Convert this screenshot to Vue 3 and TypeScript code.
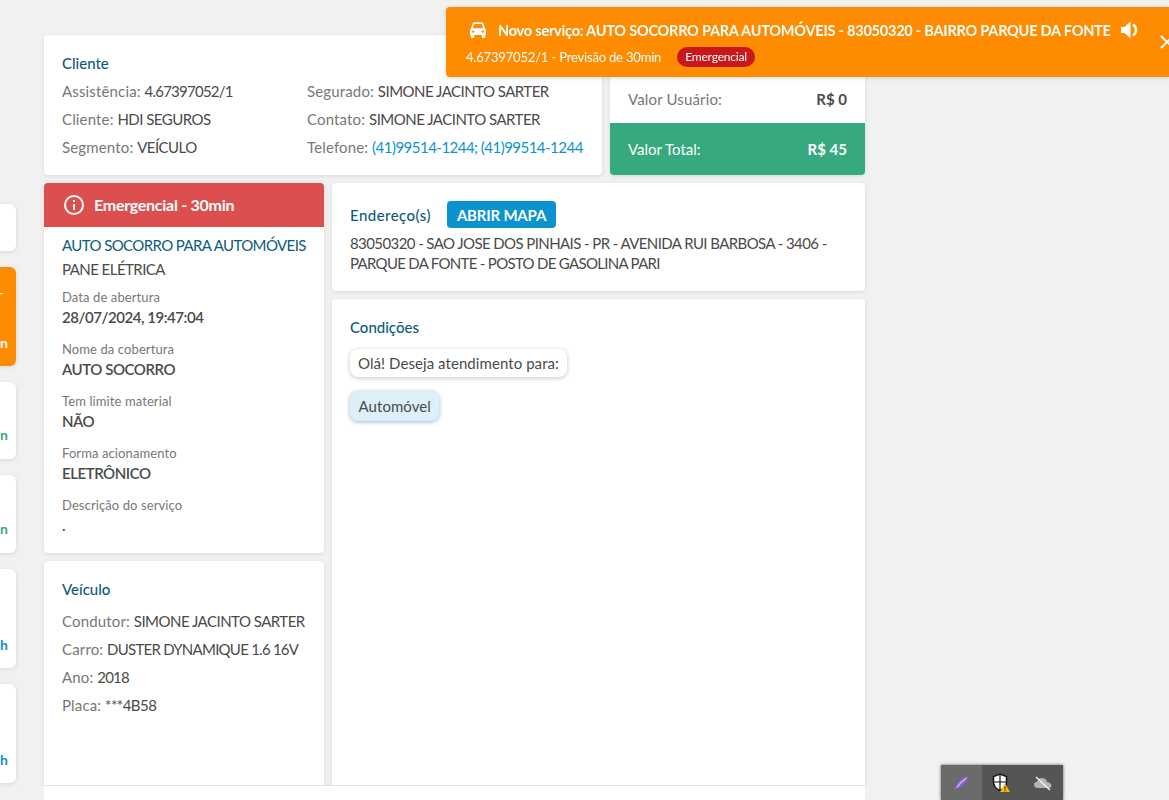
<script setup lang="ts">
interface Side { h: number; text: string; tone: string }
const sideItems: Side[] = [
  { h: 47, text: '', tone: '' },
  { h: 99, text: 'n', tone: 'orange' },
  { h: 77, text: 'n', tone: 'green' },
  { h: 78, text: 'n', tone: 'green' },
  { h: 99, text: 'h', tone: 'blue' },
  { h: 99, text: 'h', tone: 'blue' },
]
const details = [
  { label: 'Data de abertura', value: '28/07/2024, 19:47:04' },
  { label: 'Nome da cobertura', value: 'AUTO SOCORRO' },
  { label: 'Tem limite material', value: 'NÃO' },
  { label: 'Forma acionamento', value: 'ELETRÔNICO' },
  { label: 'Descrição do serviço', value: '.' },
]
const vehicle = [
  { k: 'Condutor', v: 'SIMONE JACINTO SARTER', tight: false },
  { k: 'Carro', v: 'DUSTER DYNAMIQUE 1.6 16V', tight: true },
  { k: 'Ano', v: '2018', tight: true },
  { k: 'Placa', v: '***4B58', tight: false },
]
</script>

<template>
  <div class="page">
    <aside class="side">
      <div v-for="(s, i) in sideItems" :key="i" class="side-card" :class="s.tone" :style="{ height: s.h + 'px' }">
        <span v-if="s.tone === 'orange'" class="dash">-</span>
        <span v-if="s.text" class="side-text">{{ s.text }}</span>
      </div>
    </aside>

    <main class="main">
      <div class="row-top">
        <section class="card client">
          <h3 class="title">Cliente</h3>
          <div class="client-grid">
            <div class="col-a">
              <p><span class="k">Assistência:</span> <span class="v num">4.67397052/1</span></p>
              <p><span class="k">Cliente:</span> <span class="v">HDI SEGUROS</span></p>
              <p><span class="k">Segmento:</span> <span class="v">VEÍCULO</span></p>
            </div>
            <div class="col-b">
              <p><span class="k">Segurado:</span> <span class="v">SIMONE JACINTO SARTER</span></p>
              <p><span class="k">Contato:</span> <span class="v">SIMONE JACINTO SARTER</span></p>
              <p><span class="k">Telefone:</span> <span class="link v">(41)99514-1244; (41)99514-1244</span></p>
            </div>
          </div>
        </section>
        <section class="card values">
          <div class="val-row"><span class="k">Valor Usuário:</span><b>R$ 0</b></div>
          <div class="val-total"><span>Valor Total:</span><b>R$ 45</b></div>
        </section>
      </div>

      <div class="row-body">
        <div class="left-col">
          <section class="card service">
            <div class="alert">
              <svg width="22" height="22" viewBox="0 0 22 22" fill="none" stroke="#fff" stroke-width="2">
                <circle cx="11" cy="11" r="9" />
                <path d="M11 10v6M11 6v2" />
              </svg>
              <span class="alert-text">Emergencial - 30min</span>
            </div>
            <div class="service-body">
              <div class="svc-title">AUTO SOCORRO PARA AUTOMÓVEIS</div>
              <div class="svc-sub">PANE ELÉTRICA</div>
              <div v-for="d in details" :key="d.label" class="detail">
                <div class="d-label">{{ d.label }}</div>
                <div class="d-value">{{ d.value }}</div>
              </div>
            </div>
          </section>
          <section class="card vehicle">
            <h3 class="title">Veículo</h3>
            <p v-for="r in vehicle" :key="r.k"><span class="k">{{ r.k }}:</span> <span class="v" :class="{ num: r.tight }">{{ r.v }}</span></p>
          </section>
        </div>
        <div class="right-col">
          <section class="card address">
            <div class="addr-head">
              <h3 class="title wide">Endereço(s)</h3>
              <button class="map-btn">ABRIR MAPA</button>
            </div>
            <p class="addr-text">
              <span class="addr-a">83050320 - SAO JOSE DOS PINHAIS - PR - AVENIDA RUI BARBOSA - 3406 -</span>
              <span class="addr-b">PARQUE DA FONTE - POSTO DE GASOLINA PARI</span>
            </p>
          </section>
          <section class="card conditions">
            <h3 class="title">Condições</h3>
            <div class="bubble">Olá! Deseja atendimento para:</div>
            <div class="bubble answer">Automóvel</div>
          </section>
        </div>
      </div>
      <div class="footer"></div>
    </main>

    <div class="toast">
      <div class="toast-line1">
        <svg class="car" width="18" height="16" viewBox="0 0 18 16" fill="none">
          <path d="M2.800 7 4 2.600C4.200 1.800 4.800 1.200 5.600 1.200h6.800c.8 0 1.400.6 1.600 1.400L15.200 7" stroke="#fff" stroke-width="1.700" />
          <path d="M1 8.200C1 7 1.800 6.300 3 6.300h12c1.200 0 2 .7 2 1.900V13H1z" fill="#fff" />
          <path d="M1.800 13h3.400v2.200a.8.8 0 0 1-.8.8H2.600a.8.8 0 0 1-.8-.8zM12.800 13h3.400v2.200a.8.8 0 0 1-.8.8h-1.800a.8.8 0 0 1-.8-.8z" fill="#fff" />
          <circle cx="4.200" cy="9.600" r="1.200" fill="#ff8c00" />
          <circle cx="13.800" cy="9.600" r="1.200" fill="#ff8c00" />
        </svg>
        <b>Novo serviço: AUTO SOCORRO PARA AUTOMÓVEIS - 83050320 - BAIRRO PARQUE DA FONTE</b>
        <svg class="sound" width="18" height="18" viewBox="0 0 18 18" fill="none">
          <path d="M0 6h3.500L9.500 .5v17L3.500 12H0z" fill="#fff" />
          <path d="M12 3.500a6.500 6.500 0 0 1 0 11" stroke="#fff" stroke-width="2.400" />
        </svg>
      </div>
      <div class="toast-line2">
        <span>4.67397052/1 - Previsão de 30min</span>
        <span class="pill">Emergencial</span>
      </div>
      <svg class="close" width="14" height="14" viewBox="0 0 14 14" stroke="#fff" stroke-width="1.800"><path d="M1 1l12 12M13 1 1 13" /></svg>
    </div>

    <div class="tray">
      <div class="tile on">
        <svg width="16" height="16" viewBox="0 0 16 16">
          <path d="M1 15C2.500 9 8 3 15 1c-.5 5.500-4.500 10.500-11 12z" fill="#9060d0" />
          <path d="M4 12.500C6.500 8.500 9.500 5.500 13.500 3" stroke="#d6bdf5" stroke-width="1.300" fill="none" />
        </svg>
      </div>
      <div class="tile">
        <svg width="20" height="20" viewBox="0 0 20 20">
          <path d="M8 1.200 14.500 3.500V9c0 4-3 7-6.500 8.500C4.500 16 1.500 13 1.500 9V3.500z" fill="#fff" stroke="#111" stroke-width="1.400" />
          <path d="M8 2v15M2 9h12" stroke="#111" stroke-width="1.200" />
          <path d="M13 10.500 18 19H8z" fill="#f5b800" />
          <path d="M13 13.500v3M13 17.200v1" stroke="#222" stroke-width="1" />
        </svg>
      </div>
      <div class="tile">
        <svg width="20" height="16" viewBox="0 0 20 16">
          <path d="M4.500 13C2.500 13 1 11.600 1 9.800 1 8 2.400 6.800 4 6.700 4.700 4.500 6.700 3 9 3c2.700 0 4.900 1.900 5.300 4.300C16.800 7.400 18.500 9 18.500 10.500c0 1.700-1.200 2.500-2.500 2.500z" fill="#b4b4b4" />
          <path d="M3 2l14 13" stroke="#f2f2f2" stroke-width="1.500" />
        </svg>
      </div>
    </div>
  </div>
</template>

<style>
html, body { margin: 0; background: #f1f1f1; overflow: hidden; }
</style>

<style scoped>
.page {
  display: flex;
  height: 800px;
  overflow: hidden;
  background: #f1f1f1;
  font-family: Lato, "Noto Sans", sans-serif;
  font-size: 15px;
  color: #4a4a4a;
}
p { margin: 0; }
.side {
  width: 16px;
  flex: none;
  padding-top: 204px;
  display: flex;
  flex-direction: column;
  gap: 16px;
}
.side-card {
  flex: none;
  background: #fff;
  border-radius: 0 6px 6px 0;
  box-shadow: 0 1px 4px rgba(0, 0, 0, .12);
  position: relative;
  overflow: hidden;
}
.side-text {
  position: absolute;
  right: 8px;
  bottom: 15px;
  font-size: 14px;
  font-weight: 700;
}
.side-card.orange { background: #ff8c00; color: #fff; }
.dash { position: absolute; right: 12px; top: 17px; font-size: 14px; color: #fff; }
.side-card.green .side-text { color: #36a97f; bottom: 16px; }
.side-card.blue .side-text { color: #0a93cf; }
.main {
  width: 821px;
  margin-left: 28px;
  padding-top: 35px;
  flex: none;
  display: flex;
  flex-direction: column;
}
.card {
  background: #fff;
  border-radius: 4px;
  box-shadow: 0 1px 4px rgba(0, 0, 0, .1);
}
.title {
  margin: 0;
  font-size: 15px;
  font-weight: 500;
  color: #0d5b7e;
  line-height: 20px;
}
.title.wide { letter-spacing: .45px; }
.k { color: #777; letter-spacing: .15px; }
.v { letter-spacing: -.52px; }
.v.num { letter-spacing: -.75px; }
.row-top { display: flex; gap: 8px; height: 140px; }
.client { width: 558px; padding: 18px 18px 0; box-sizing: border-box; }
.client-grid { display: flex; margin-top: 4px; }
.col-a { width: 245px; flex: none; }
.client-grid p { line-height: 28px; white-space: nowrap; }
.link { color: #0a93cf; }
.values {
  width: 255px;
  display: flex;
  flex-direction: column;
  justify-content: flex-end;
  overflow: hidden;
}
.val-row {
  display: flex;
  justify-content: space-between;
  align-items: center;
  height: 48px;
  padding: 0 18px;
}
.val-total {
  display: flex;
  justify-content: space-between;
  align-items: center;
  height: 52px;
  padding: 0 18px;
  background: #36a97f;
  color: #fff;
}
.row-body { display: flex; gap: 8px; margin-top: 8px; height: 602px; flex: none; }
.left-col { width: 280px; display: flex; flex-direction: column; gap: 8px; }
.right-col { width: 533px; display: flex; flex-direction: column; gap: 8px; }
.service { height: 370px; flex: none; overflow: hidden; }
.alert {
  height: 44px;
  background: #dd4f4f;
  color: #fff;
  font-weight: 700;
  font-size: 16px;
  letter-spacing: -.27px;
  display: flex;
  align-items: center;
  gap: 9px;
  padding-left: 19px;
}
.alert-text { margin-top: -2px; }
.service-body { padding: 7px 18px 0; }
.svc-title { color: #0d5b7e; line-height: 22px; white-space: nowrap; letter-spacing: -.6px; }
.svc-sub { line-height: 26px; letter-spacing: -.55px; }
.detail { margin-top: 5px; height: 47px; margin-bottom: 0; }
.d-label { font-size: 13px; color: #777; line-height: 20px; letter-spacing: .1px; }
.d-value { font-weight: 600; line-height: 21px; letter-spacing: -.45px; }
.vehicle { flex: 1; padding: 18px 18px 0; border-radius: 4px 4px 0 0; }
.vehicle p { line-height: 28px; white-space: nowrap; }
.vehicle .title { margin-bottom: 8px; }
.address { height: 108px; flex: none; padding: 18px 18px 0; box-sizing: border-box; }
.addr-head { display: flex; align-items: center; gap: 16px; }
.map-btn {
  height: 27px;
  border: 0;
  padding: 0 10px;
  border-radius: 4px;
  background: #0a93cf;
  color: #fff;
  font: 700 15px Lato, sans-serif;
  letter-spacing: -.2px;
}
.addr-text { line-height: 20px; margin-top: 5px; }
.addr-a, .addr-b { display: block; white-space: nowrap; }
.addr-a { letter-spacing: -.59px; }
.addr-b { letter-spacing: -.7px; }
.conditions { flex: 1; padding: 18px 18px 0; border-radius: 4px 4px 0 0; }
.bubble {
  width: fit-content;
  margin-top: 12px;
  padding: 0 8px;
  height: 28px;
  line-height: 28px;
  border-radius: 8px;
  background: #fff;
  box-shadow: 0 1px 4px rgba(0, 0, 0, .25);
  letter-spacing: .07px;
}
.bubble.answer { background: #dcf0f9; margin-top: 14px; padding: 0 8.500px; height: 30px; line-height: 30px; box-shadow: 0 1px 4px rgba(40, 100, 130, .45); }
.footer { height: 15px; flex: none; background: #fff; border-top: 1px solid #e4e4e4; box-sizing: border-box; position: relative; }
.toast {
  position: fixed;
  left: 446px;
  top: 7px;
  width: 723px;
  height: 70px;
  background: #ff8c00;
  color: #fff;
  border-radius: 4px 0 0 4px;
  box-shadow: 0 1px 4px rgba(0, 0, 0, .15);
  overflow: hidden;
}
.toast-line1 {
  display: flex;
  align-items: center;
  height: 24px;
  margin-top: 11px;
  padding-left: 23px;
  white-space: nowrap;
  font-size: 14.500px;
  letter-spacing: -.22px;
}
.car { margin-right: 11px; flex: none; }
.sound { margin-left: 10px; flex: none; }
.toast-line2 {
  display: flex;
  align-items: center;
  gap: 16px;
  margin-top: 5px;
  padding-left: 20px;
  font-size: 13px;
  height: 20px;
  letter-spacing: -.18px;
}
.pill {
  background: #c8181c;
  border-radius: 10px;
  padding: 0 8px;
  font-size: 12px;
  line-height: 20px;
}
.close { position: absolute; left: 714px; top: 28px; }
.tray {
  position: fixed;
  left: 941px;
  top: 765px;
  width: 122px;
  height: 35px;
  display: flex;
  background: #555;
  box-shadow: 0 0 3px rgba(0, 0, 0, .6);
}
.tile { flex: 1; display: flex; align-items: center; justify-content: center; }
.tile.on { background: #6b6b6b; }
</style>
